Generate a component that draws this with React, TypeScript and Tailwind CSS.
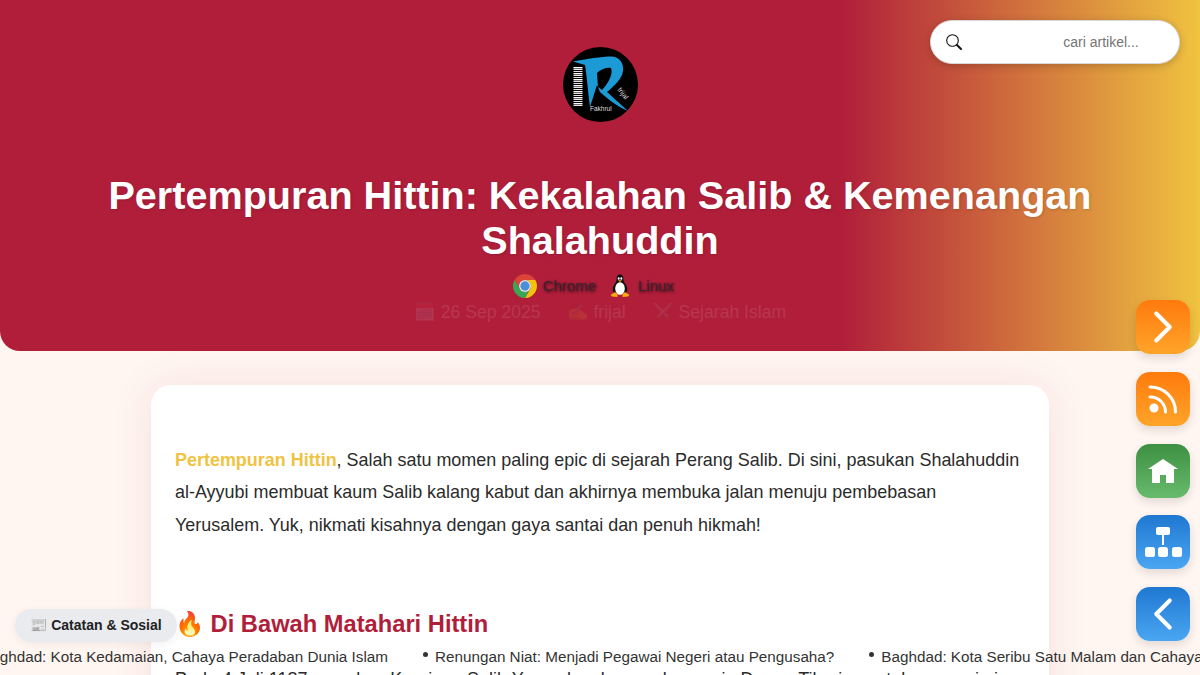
import { ChevronLeft, ChevronRight } from 'lucide-react'

const Logo = () => (
  <svg viewBox="0 0 75 75" className="w-[75px] h-[75px] block">
    <circle cx="37.5" cy="37.5" r="37.5" fill="#000" />
    <path
      d="M10 14.500 C24 12 38 9.500 49 9.500 C57 10 61 17 60 24 C59 32 51 39 44 45 L65 64 C55 60 46 53 37 45 L34 38 L27 60 C25 45 24 30 22 18 Z"
      fill="#1b9ad6"
    />
    <path d="M34 26 C38 22 44 20 48 21 C50 26 47 34 39 43 L35 40 Z" fill="#000" />
    {[20, 22, 24, 26, 28, 30, 32, 34, 36, 38, 40, 42, 44, 46, 48, 50, 52, 54, 56, 58].map((y, i) => (
      <rect key={y} x="10.500" y={y} width="9" height={i % 3 === 0 ? 1.4 : 0.9} fill="#fff" />
    ))}
    <text x="27" y="64" fontSize="6.500" fill="#ddd" fontFamily="Liberation Sans, sans-serif">Fakhrul</text>
    <text x="54" y="43" fontSize="7" fill="#ddd" fontFamily="Liberation Sans, sans-serif" transform="rotate(50 54 43)">frijal</text>
  </svg>
)

const ChromeIcon = () => (
  <svg viewBox="2 2 44 44" className="w-6 h-6 shrink-0">
    <path d="M4.950 13 A22 22 0 0 1 43.050 13 L24 13 A11 11 0 0 0 14.500 29.500 Z" fill="#db4437" />
    <path d="M43.050 13 A22 22 0 0 1 24 46 L33.500 29.500 A11 11 0 0 0 24 13 Z" fill="#f4c20d" />
    <path d="M24 46 A22 22 0 0 1 4.950 13 L14.500 29.500 A11 11 0 0 0 33.500 29.500 Z" fill="#3aa757" />
    <circle cx="24" cy="24" r="11" fill="#e8e8e8" />
    <circle cx="24" cy="24" r="8.500" fill="#4a8fd8" />
  </svg>
)

const TuxIcon = () => (
  <svg viewBox="0 0 24 24" className="w-6 h-6 shrink-0">
    <path d="M12 0.500 C9 0.500 8.500 3 8.600 6 C8.700 8 6 10 5 13 C4.300 15.500 5 18 6 19 L18 19 C19 18 19.700 15.500 19 13 C18 10 15.300 8 15.400 6 C15.500 3 15 0.500 12 0.500 Z" fill="#111" />
    <ellipse cx="12" cy="14.500" rx="4.800" ry="6.300" fill="#fff" />
    <ellipse cx="10.700" cy="4.500" rx="1" ry="1.300" fill="#fff" />
    <ellipse cx="13.300" cy="4.500" rx="1" ry="1.300" fill="#fff" />
    <path d="M10 6.300 L14 6.300 L12 8 Z" fill="#f5a90f" />
    <path d="M7 18 L2.500 21 L4 22.500 L9.500 23 L9.500 20 Z" fill="#f5a90f" />
    <path d="M17 18 L21.500 21 L20 22.500 L14.500 23 L14.500 20 Z" fill="#f5a90f" />
  </svg>
)

const SearchIcon = () => (
  <svg viewBox="0 0 16 16" className="w-4 h-4 shrink-0">
    <circle cx="6.500" cy="6.500" r="5.800" fill="none" stroke="#111" strokeWidth="1.100" />
    <path d="M11 11 L15 15" stroke="#111" strokeWidth="2" strokeLinecap="round" />
  </svg>
)

const RssIcon = () => (
  <svg viewBox="0 0 30 30" className="w-[30px] h-[30px]">
    <circle cx="6" cy="24" r="4.500" fill="#fff" />
    <path d="M2 13 A15 15 0 0 1 17.500 28" fill="none" stroke="#fff" strokeWidth="3" strokeLinecap="round" />
    <path d="M2 3 A25 25 0 0 1 27.500 28" fill="none" stroke="#fff" strokeWidth="3" strokeLinecap="round" />
  </svg>
)

const HomeIcon = () => (
  <svg viewBox="0 0 30 24" className="w-[30px] h-6">
    <path d="M15 0 L30 10 L26 10 L26 24 L18 24 L18 16 L12 16 L12 24 L4 24 L4 10 L0 10 Z" fill="#fff" />
  </svg>
)

const SitemapIcon = () => (
  <svg viewBox="0 0 37 30" className="w-[37px] h-[30px]">
    <rect x="11" y="0" width="14" height="8" rx="2" fill="#fff" />
    <rect x="17" y="7" width="2" height="11" fill="#fff" />
    <rect x="0" y="20" width="10" height="10" rx="2.500" fill="#fff" />
    <rect x="13" y="20" width="10" height="10" rx="2.500" fill="#fff" />
    <rect x="27" y="20" width="10" height="10" rx="2.500" fill="#fff" />
  </svg>
)

const sideButtons = [
  { cls: 'from-[#ff7a0c] to-[#ffa428]', icon: <ChevronRight size={54} strokeWidth={1.8} /> },
  { cls: 'from-[#ff7a0c] to-[#ffa428]', icon: <RssIcon /> },
  { cls: 'from-[#3d8f42] to-[#68bb6c]', icon: <HomeIcon /> },
  { cls: 'from-[#1f78d1] to-[#4aa6f2]', icon: <SitemapIcon /> },
  { cls: 'from-[#1f78d1] to-[#4aa6f2]', icon: <ChevronLeft size={54} strokeWidth={1.8} /> },
]

const tickerItems = [
  'Renungan Niat: Menjadi Pegawai Negeri atau Pengusaha?',
  'Baghdad: Kota Seribu Satu Malam dan Cahaya Ilmu',
]

const App = () => {
  return (
    <div className="h-screen overflow-hidden bg-[#fff6f1] font-['Liberation_Sans','Noto_Sans_CJK_SC',sans-serif] relative">
      {/* header */}
      <header className="h-[351px] rounded-b-[20px] bg-[linear-gradient(90deg,#b01e3a_70%,#f0c340_100%)] pt-[47px] flex flex-col items-center text-center">
        <Logo />
        <h1 className="mt-[50.5px] w-[1040px] text-[39.6px] leading-[45.5px] font-bold text-white [text-shadow:1px_1px_3px_rgba(0,0,0,0.15)]">
          Pertempuran Hittin: Kekalahan Salib &amp; Kemenangan Shalahuddin
        </h1>
        <div className="mt-[10.5px] mr-[13px] flex items-center gap-[12px] text-[15px] text-[#3f2230] h-6 [text-shadow:1px_1px_3px_rgba(0,0,0,0.75)]">
          <span className="flex items-center gap-[5px]"><ChromeIcon />Chrome</span>
          <span className="flex items-center gap-[6px]"><TuxIcon />Linux</span>
        </div>
        <div className="mt-[2px] flex items-center gap-[26px] text-[17.6px] leading-[24px] text-white opacity-[0.1]">
          <span>🗓️ 26 Sep 2025</span>
          <span>✍️ frijal</span>
          <span>⚔️ Sejarah Islam</span>
        </div>
      </header>

      {/* article card */}
      <main className="mt-[34px] mx-auto w-[898px] bg-white rounded-[20px] px-6 pt-[59px] pb-8 shadow-[0_0_40px_rgba(176,30,58,0.1)] text-[17.97px] leading-[32.3px] text-[#2b2b2b]">
        <p>
          <strong className="text-[#f0c340] font-bold">Pertempuran Hittin</strong>, Salah satu momen paling epic di sejarah Perang Salib. Di sini, pasukan Shalahuddin al-Ayyubi membuat kaum Salib kalang kabut dan akhirnya membuka jalan menuju pembebasan Yerusalem. Yuk, nikmati kisahnya dengan gaya santai dan penuh hikmah!
        </p>
        <h2 className="mt-[67px] text-[23.7px] leading-[32px] font-bold text-[#b01e3a]">🔥 Di Bawah Matahari Hittin</h2>
        <p className="mt-[23px]">
          Pada 4 Juli 1187, pasukan Kerajaan Salib Yerusalem bergerak menuju Danau Tiberias untuk mencari air dan tempat.
        </p>
      </main>

      {/* search */}
      <div className="absolute top-5 right-5 w-[250px] h-[44px] rounded-full bg-white border border-[#d8d8d8] shadow-[0_2px_8px_rgba(0,0,0,0.2)] flex items-center pl-[15px] pr-4">
        <SearchIcon />
        <input
          readOnly
          placeholder="cari artikel..."
          className="flex-1 min-w-0 pl-[77px] text-center text-[14px] bg-transparent outline-none placeholder:text-[#757575]"
        />
      </div>

      {/* side nav */}
      <nav className="absolute right-[10px] top-[300px] flex flex-col gap-[17.75px]">
        {sideButtons.map((b, i) => (
          <a key={i} className={`w-[54px] h-[54px] rounded-[14px] bg-gradient-to-b ${b.cls} text-white flex items-center justify-center shadow-[0_4px_10px_rgba(0,0,0,0.12)]`}>
            {b.icon}
          </a>
        ))}
      </nav>

      {/* notes pill */}
      <div className="absolute left-[15px] top-[609px] w-[162px] h-[33px] rounded-full bg-[#e9ebef] shadow-[0_2px_8px_rgba(0,0,0,0.06)] flex items-center justify-center text-[14px] font-bold text-[#222]">
        📰 Catatan &amp; Sosial
      </div>

      {/* ticker */}
      <div className="absolute left-0 right-0 top-[646px] h-[22px] overflow-hidden whitespace-nowrap text-[15.25px] leading-[22px] text-[#333] flex">
        <span className="w-[388px] mr-[35px] shrink-0 flex justify-end">
          <span className="shrink-0">Baghdad: Kota Kedamaian, Cahaya Peradaban Dunia Islam</span>
        </span>
        {tickerItems.map((t) => (
          <span key={t} className="mr-[35px] shrink-0 flex items-start">
            <span className="w-[5px] h-[5px] rounded-full bg-[#333] mt-[6px] mr-[7px]" />
            {t}
          </span>
        ))}
      </div>
    </div>
  )
}

export default App
